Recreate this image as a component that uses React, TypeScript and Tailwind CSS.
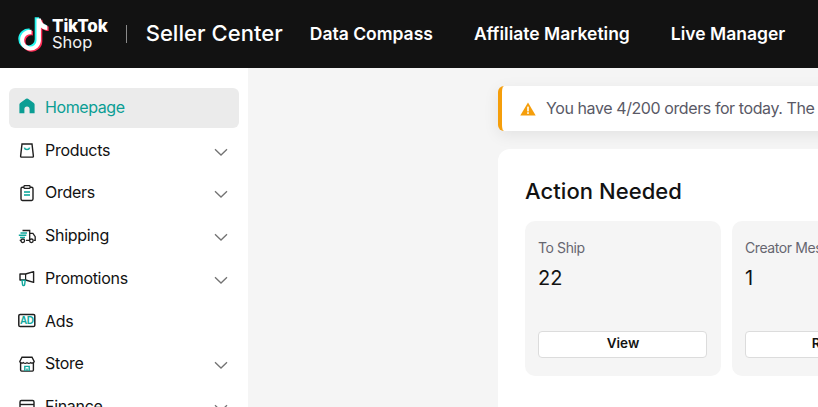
const font = { fontFamily: "Inter, 'Liberation Sans', sans-serif" };

function Chevron() {
  return (
    <svg width="16" height="16" viewBox="0 0 16 16" fill="none" className="ml-auto mr-[3px] mt-[2px] shrink-0">
      <path d="M2 5.2 8 11l6-5.8" stroke="#737373" strokeWidth="1.3" />
    </svg>
  );
}

const T = "#12a89d";
const K = "#1f1f1f";

const icons: Record<string, React.ReactNode> = {
  home: <path d="M9 1.4 Q9.6 1.4 10 1.8 L15.8 6 Q16.6 6.6 16.6 7.6 v8.6 h-5 v-4 a2.6 2.6 0 0 0-5.2 0 v4 h-5 V7.6 Q1.4 6.6 2.2 6 L8 1.8 Q8.4 1.4 9 1.4z" fill="#0b9e94" />,
  products: (
    <>
      <path d="M4 3h10l1.4 12.2a.8.8 0 0 1-.8.9H3.4a.8.8 0 0 1-.8-.9z" stroke={K} strokeWidth="1.4" fill="none" />
      <path d="M6.4 6.6c.5 2.6 4.7 2.6 5.2 0" stroke={T} strokeWidth="1.5" fill="none" />
    </>
  ),
  orders: (
    <>
      <rect x="3" y="3.3" width="12" height="13.2" rx="1.4" stroke={K} strokeWidth="1.4" fill="none" />
      <rect x="6" y="1.7" width="6" height="2.6" rx=".6" stroke={K} strokeWidth="1.2" fill="#fff" />
      <rect x="6" y="7.2" width="6" height="1.6" fill={T} />
      <rect x="6" y="10.2" width="6" height="1.6" fill={T} />
    </>
  ),
  shipping: (
    <>
      <path d="M4.5 3.5h7.2l0 9.5M11.7 6.4h3.2l2.3 3.2v3.7h-1.6M11.7 13.3H8M3 13.3H1.7" stroke={K} strokeWidth="1.3" fill="none" />
      <circle cx="4.8" cy="13.8" r="1.8" stroke={K} strokeWidth="1.3" fill="#fff" />
      <circle cx="13.4" cy="13.8" r="1.8" stroke={K} strokeWidth="1.3" fill="#fff" />
      <path d="M2.5 6h6.5M.8 8.3h7.5M2 10.6h5" stroke={T} strokeWidth="1.5" />
    </>
  ),
  promotions: (
    <>
      <path d="M15.6 2.6v10.8L7.6 11H2V5h5.6z" stroke={K} strokeWidth="1.4" fill="none" strokeLinejoin="round" />
      <path d="M7.6 5v6" stroke={K} strokeWidth="1.2" />
      <path d="M4 11.4h3.2l-.6 4.4a.9.9 0 0 1-.9.7h-.3a.9.9 0 0 1-.8-.7z" stroke={T} strokeWidth="1.4" fill="none" />
    </>
  ),
  ads: (
    <>
      <rect x=".8" y="2.4" width="16" height="12.2" rx="1.4" stroke={K} strokeWidth="1.5" fill="none" />
      <text x="8.8" y="12.2" textAnchor="middle" fontSize="10" fontWeight="700" fill={T} fontFamily="'Liberation Sans', sans-serif">AD</text>
    </>
  ),
  store: (
    <>
      <path d="M2.6 7.5v7.6a1 1 0 0 0 1 1h10.8a1 1 0 0 0 1-1V7.5" stroke={K} strokeWidth="1.4" fill="none" />
      <path d="M4 2.2h10l2.2 4.3a2.4 2.4 0 0 1-3.6 1.2 3 3 0 0 1-3.6 0 3 3 0 0 1-3.6 0 2.4 2.4 0 0 1-3.6-1.2z" stroke={K} strokeWidth="1.4" fill="#fff" />
      <path d="M6.8 16v-4.6h4.4V16M9 16v-2.6" stroke={T} strokeWidth="1.4" fill="none" />
    </>
  ),
  finance: (
    <>
      <rect x="2" y="2.5" width="14" height="13" rx="1.4" stroke={K} strokeWidth="1.4" fill="none" />
      <path d="M2 6.5h14" stroke={K} strokeWidth="1.4" />
    </>
  ),
};

function NavRow({ icon, label, chevron = true }: { icon: string; label: string; chevron?: boolean }) {
  return (
    <div className="mb-[2.75px] flex h-[40px] items-center pl-[9px] pr-[7px] text-[16px] leading-[24px] tracking-[-0.3px] text-[#121212]">
      <svg width="18" height="18" viewBox="0 0 18 18" className="-mt-[1px] shrink-0">
        {icons[icon]}
      </svg>
      <span className="-mt-[2px] ml-[9px]">{label}</span>
      {chevron && <Chevron />}
    </div>
  );
}

const TIKTOK_NOTE =
  "M13.5 13.7v4.6a6.2 6.2 0 1 0 5 6.1V2.5h4.4c.3 3.6 2.7 6.3 6.4 6.9v4.5c-2.6 0-4.8-1-6.4-2.4v12.8a10.4 10.4 0 1 1-9.4-10.6z";

function Logo() {
  return (
    <div className="flex items-center text-white">
      <svg width="32" height="37" viewBox="0 0 32 37" className="shrink-0">
        <path d={TIKTOK_NOTE} transform="translate(-1.8 -1.2)" fill="#25f4ee" />
        <path d={TIKTOK_NOTE} transform="translate(1.4 1.2)" fill="#fe2c55" />
        <path d={TIKTOK_NOTE} fill="#fff" />
      </svg>
      <div className="ml-[2px] flex flex-col">
        <span className="text-[17px] font-extrabold leading-[16px] tracking-[-0.1px]">TikTok</span>
        <span className="text-[16.5px] font-normal leading-[16px] text-[#f1f1f1]">Shop</span>
      </div>
    </div>
  );
}

function Tile({ title, value, action }: { title: string; value: string; action: string }) {
  return (
    <div className="flex h-[155px] w-[196px] shrink-0 flex-col rounded-[10px] bg-[#f5f5f5] pb-[18px] pl-[13px] pr-[14px] pt-[17px]">
      <div className="whitespace-nowrap text-[14px] leading-[20px] tracking-[-0.4px] text-[#666670]">{title}</div>
      <div className="mt-[8px] text-[20px] leading-[24px] text-[#121212]">{value}</div>
      <button className="mt-auto h-[27px] w-full rounded-[4px] border border-[#dcdcdc] bg-white pb-[2px] pl-[1px] text-[13.5px] font-semibold text-[#121212]">
        {action}
      </button>
    </div>
  );
}

export default function App() {
  return (
    <div className="flex h-[407px] w-[818px] flex-col overflow-hidden bg-[#f5f5f5]" style={font}>
      <header className="flex h-[68px] shrink-0 items-center bg-[#121212] pl-[18px] text-white">
        <Logo />
        <div className="ml-[18px] h-[18px] w-px bg-[#8a8a8a]" />
        <div className="-mt-[2px] ml-[19px] text-[22px] font-medium leading-[28px] tracking-[0.05px]">Seller Center</div>
        <nav className="ml-[27px] flex gap-[41px] text-[17.5px] font-semibold leading-[24px]">
          <span>Data Compass</span>
          <span>Affiliate Marketing</span>
          <span>Live Manager</span>
        </nav>
      </header>
      <div className="flex min-h-0 flex-1">
        <aside className="w-[248px] shrink-0 overflow-hidden bg-white pl-[9px] pr-[9px] pt-[19.9px]">
          <div className="mb-[2.75px] flex h-[40px] items-center rounded-[6px] bg-[#ebebeb] pl-[9px] text-[16px] tracking-[-0.4px] text-[#0b9e94]">
            <svg width="18" height="18" viewBox="0 0 18 18" className="-mt-[3px] shrink-0">{icons.home}</svg>
            <span className="-mt-[2px] ml-[9px]">Homepage</span>
          </div>
          <NavRow icon="products" label="Products" />
          <NavRow icon="orders" label="Orders" />
          <NavRow icon="shipping" label="Shipping" />
          <NavRow icon="promotions" label="Promotions" />
          <NavRow icon="ads" label="Ads" chevron={false} />
          <NavRow icon="store" label="Store" />
          <NavRow icon="finance" label="Finance" />
        </aside>
        <main className="min-w-0 flex-1 overflow-hidden pl-[250px] pt-[18px]">
          <div className="w-[700px]">
            <div className="flex h-[45px] items-center rounded-[6px] border-l-[4px] border-[#f59e0b] bg-white pl-[18px] shadow-[0_4px_16px_rgba(0,0,0,0.08)]">
              <svg width="16" height="14" viewBox="0 0 16 14" className="shrink-0">
                <path d="M8 0.4 15.7 13.6H.3z" fill="#f59e0b" />
                <rect x="7.2" y="4.6" width="1.6" height="4.8" fill="#fff" />
                <rect x="7.2" y="10.2" width="1.6" height="1.7" fill="#fff" />
              </svg>
              <span className="-mt-[2px] ml-[10px] whitespace-nowrap text-[16px] tracking-[-0.41px] text-[#595966]">You have 4/200 orders for today. The</span>
            </div>
            <section className="mt-[18px] h-[300px] rounded-[12px] bg-white pl-[27px] pt-[27px]">
              <h2 className="text-[22px] font-medium leading-[30px] tracking-[0.06px] text-[#121212]">Action Needed</h2>
              <div className="mt-[15px] flex gap-[11px]">
                <Tile title="To Ship" value="22" action="View" />
                <Tile title="Creator Messages" value="1" action="Reply" />
              </div>
            </section>
          </div>
        </main>
      </div>
    </div>
  );
}
